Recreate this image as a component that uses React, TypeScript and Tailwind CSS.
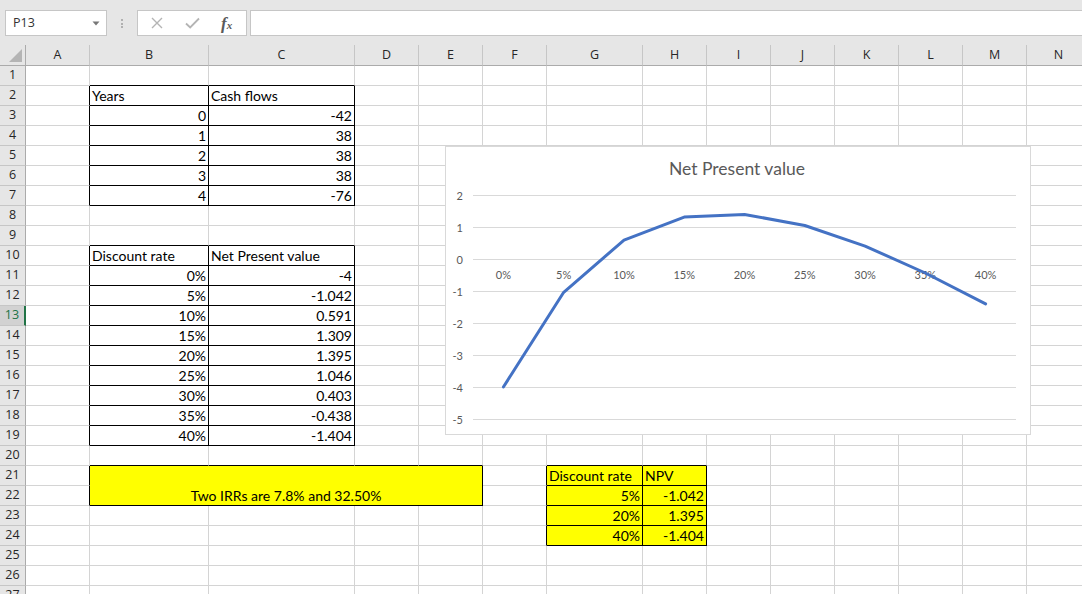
import React from 'react';

type Align = 'l' | 'r' | 'c';
interface CellData {
  t: string;
  a: Align;
}

const COLS = ['A', 'B', 'C', 'D', 'E', 'F', 'G', 'H', 'I', 'J', 'K', 'L', 'M', 'N'];

const cells: Record<string, CellData> = {};
function put(ref: string, t: string, a: Align) {
  cells[ref] = { t, a };
}

put('B2', 'Years', 'l');
put('C2', 'Cash flows', 'l');
['0', '1', '2', '3', '4'].forEach((v, i) => put('B' + (3 + i), v, 'r'));
['-42', '38', '38', '38', '-76'].forEach((v, i) => put('C' + (3 + i), v, 'r'));
put('B10', 'Discount rate', 'l');
put('C10', 'Net Present value', 'l');
const rates = ['0%', '5%', '10%', '15%', '20%', '25%', '30%', '35%', '40%'];
const npvs = ['-4', '-1.042', '0.591', '1.309', '1.395', '1.046', '0.403', '-0.438', '-1.404'];
rates.forEach((v, i) => put('B' + (11 + i), v, 'r'));
npvs.forEach((v, i) => put('C' + (11 + i), v, 'r'));
put('G21', 'Discount rate', 'l');
put('H21', 'NPV', 'l');
put('G22', '5%', 'r');
put('H22', '-1.042', 'r');
put('G23', '20%', 'r');
put('H23', '1.395', 'r');
put('G24', '40%', 'r');
put('H24', '-1.404', 'r');

function bordered(r: number, c: number) {
  if (c >= 1 && c <= 2 && r >= 2 && r <= 7) return true;
  if (c >= 1 && c <= 2 && r >= 10 && r <= 19) return true;
  if (c >= 1 && c <= 4 && r >= 21 && r <= 22) return true;
  if (c >= 6 && c <= 7 && r >= 21 && r <= 24) return true;
  return false;
}
function filled(r: number, c: number) {
  return c >= 6 && c <= 7 && r >= 21 && r <= 24;
}

function TopBar() {
  return (
    <div className="flex h-[45px] items-start bg-[#e6e6e6] pt-[10px]">
      <div className="ml-[5px] flex h-[26px] w-[102px] items-center justify-between border border-[#c6c6c6] bg-white pl-[7px] pr-[6px] font-['Open_Sans',sans-serif] text-[12.5px] text-[#333]">
        <span>P13</span>
        <svg width="8" height="5" viewBox="0 0 8 5">
          <path d="M0.5 0.5 L7.5 0.5 L4 4.5 Z" fill="#777" />
        </svg>
      </div>
      <div className="ml-[14px] mt-[9px] flex w-[2px] flex-col gap-[1.5px]">
        <span className="block h-[2px] w-[2px] bg-[#b0b0b0]" />
        <span className="block h-[2px] w-[2px] bg-[#b0b0b0]" />
        <span className="block h-[2px] w-[2px] bg-[#b0b0b0]" />
      </div>
      <div className="ml-[14px] flex h-[26px] w-[110px] items-center border border-[#c6c6c6] bg-white">
        <svg className="ml-[13px]" width="12" height="12" viewBox="0 0 12 12">
          <path d="M1 1 L11 11 M11 1 L1 11" stroke="#b4b4b4" strokeWidth="1.4" fill="none" />
        </svg>
        <svg className="ml-[22px]" width="15" height="12" viewBox="0 0 15 12">
          <path d="M1 6.5 L5.2 10.5 L14 1.5" stroke="#b4b4b4" strokeWidth="1.8" fill="none" />
        </svg>
        <span className="ml-[21px] font-['Liberation_Serif',serif] text-[17px] font-bold italic leading-none text-[#5a5a5a]">
          f<span className="text-[11px]">x</span>
        </span>
      </div>
      <div className="ml-[3px] h-[26px] flex-1 border border-r-0 border-[#c6c6c6] bg-white" />
    </div>
  );
}

function Chart() {
  const top = 259;
  const unit = 32;
  const gridVals = [2, 1, 0, -1, -2, -3, -4, -5];
  const left = 473.3;
  const step = 60.27;
  const vals = [-4, -1.042, 0.591, 1.309, 1.395, 1.046, 0.403, -0.438, -1.404];
  const pts = vals
    .map((v, i) => `${(left + step * (i + 0.5)).toFixed(1)},${(top - unit * v).toFixed(1)}`)
    .join(' ');
  return (
    <div className="absolute left-[445px] top-[146px] h-[289px] w-[586px] border border-[#d9d9d9] bg-white">
      <svg width="584" height="287" viewBox="446 147 584 287" className="block">
        {gridVals.map((g) => (
          <line key={g} x1={473} x2={1016} y1={top - unit * g + 0.5} y2={top - unit * g + 0.5} stroke="#d9d9d9" strokeWidth="1" />
        ))}
        {gridVals.map((g) => (
          <text key={'y' + g} x={463} y={top - unit * g + 4.5} textAnchor="end" fontFamily="Lato, sans-serif" fontSize="11" fill="#595959">
            {g}
          </text>
        ))}
        {rates.map((r, i) => (
          <text key={r} x={left + step * (i + 0.5)} y={279} textAnchor="middle" fontFamily="Lato, sans-serif" fontSize="11" fill="#595959">
            {r}
          </text>
        ))}
        <polyline points={pts} fill="none" stroke="#4472c4" strokeWidth="3" strokeLinejoin="round" strokeLinecap="round" />
        <text x={737} y={175} textAnchor="middle" fontFamily="Lato, sans-serif" fontSize="17.5" fill="#595959">
          Net Present value
        </text>
      </svg>
    </div>
  );
}

function DataCell({ r, c }: { r: number; c: number }) {
  const ref = COLS[c] + r;
  const d = cells[ref];
  const rb = bordered(r, c) || bordered(r, c + 1);
  const bb = bordered(r, c) || bordered(r + 1, c);
  const just = d ? (d.a === 'r' ? 'justify-end' : d.a === 'c' ? 'justify-center' : 'justify-start') : 'justify-start';
  return (
    <div
      className={
        'flex items-end overflow-visible whitespace-nowrap border-r border-b px-[2px] text-[14px] leading-[18px] text-black ' +
        just +
        ' ' +
        (rb ? 'border-r-black' : 'border-r-[#d4d4d4]') +
        ' ' +
        (bb ? 'border-b-black' : 'border-b-[#d4d4d4]') +
        ' ' +
        (filled(r, c) ? 'bg-[#ffff00]' : '')
      }
    >
      {d ? d.t : null}
    </div>
  );
}

export default function App() {
  const rows = Array.from({ length: 27 }, (_, i) => i + 1);
  return (
    <div className="relative h-[594px] w-[1082px] overflow-hidden bg-white font-['Lato',sans-serif]">
      <TopBar />
      <div className="grid w-[1091px] grid-cols-[26px_64px_119px_146px_64px_64px_64px_96px_64px_64px_64px_64px_64px_64px_64px] grid-rows-[21px_repeat(27,20px)]">
        <div className="relative border-r border-b border-r-[#ababab] border-b-[#ababab] bg-[#e6e6e6]">
          <svg className="absolute right-[3px] bottom-[3px]" width="13" height="13" viewBox="0 0 13 13">
            <path d="M13 0 L13 13 L0 13 Z" fill="#b4b4b4" />
          </svg>
        </div>
        {COLS.map((c) => (
          <div
            key={c}
            className="flex items-center justify-center border-r border-b border-r-[#c6c6c6] border-b-[#ababab] bg-[#e6e6e6] pt-[1px] font-['Open_Sans',sans-serif] text-[12.5px] text-[#262626]"
          >
            {c}
          </div>
        ))}
        {rows.map((r) => (
          <React.Fragment key={r}>
            {r === 13 ? (
              <div className="flex items-center justify-center border-r-2 border-b border-r-[#217346] border-b-[#c6c6c6] bg-[#d2d2d2] font-['Open_Sans',sans-serif] text-[12.5px] text-[#217346]">
                {r}
              </div>
            ) : (
              <div className="flex items-center justify-center border-r border-b border-r-[#ababab] border-b-[#c6c6c6] bg-[#e6e6e6] font-['Open_Sans',sans-serif] text-[12.5px] text-[#262626]">
                {r}
              </div>
            )}
            {COLS.map((_, c) => {
              if (r === 21 && c === 1) {
                return (
                  <div
                    key={c}
                    className="col-span-4 row-span-2 flex items-end justify-center whitespace-nowrap border-r border-b border-r-black border-b-black bg-[#ffff00] px-[2px] text-[14px] leading-[18px] text-black"
                  >
                    Two IRRs are 7.8% and 32.50%
                  </div>
                );
              }
              if ((r === 21 || r === 22) && c >= 1 && c <= 4) return null;
              return <DataCell key={c} r={r} c={c} />;
            })}
          </React.Fragment>
        ))}
      </div>
      <Chart />
    </div>
  );
}
